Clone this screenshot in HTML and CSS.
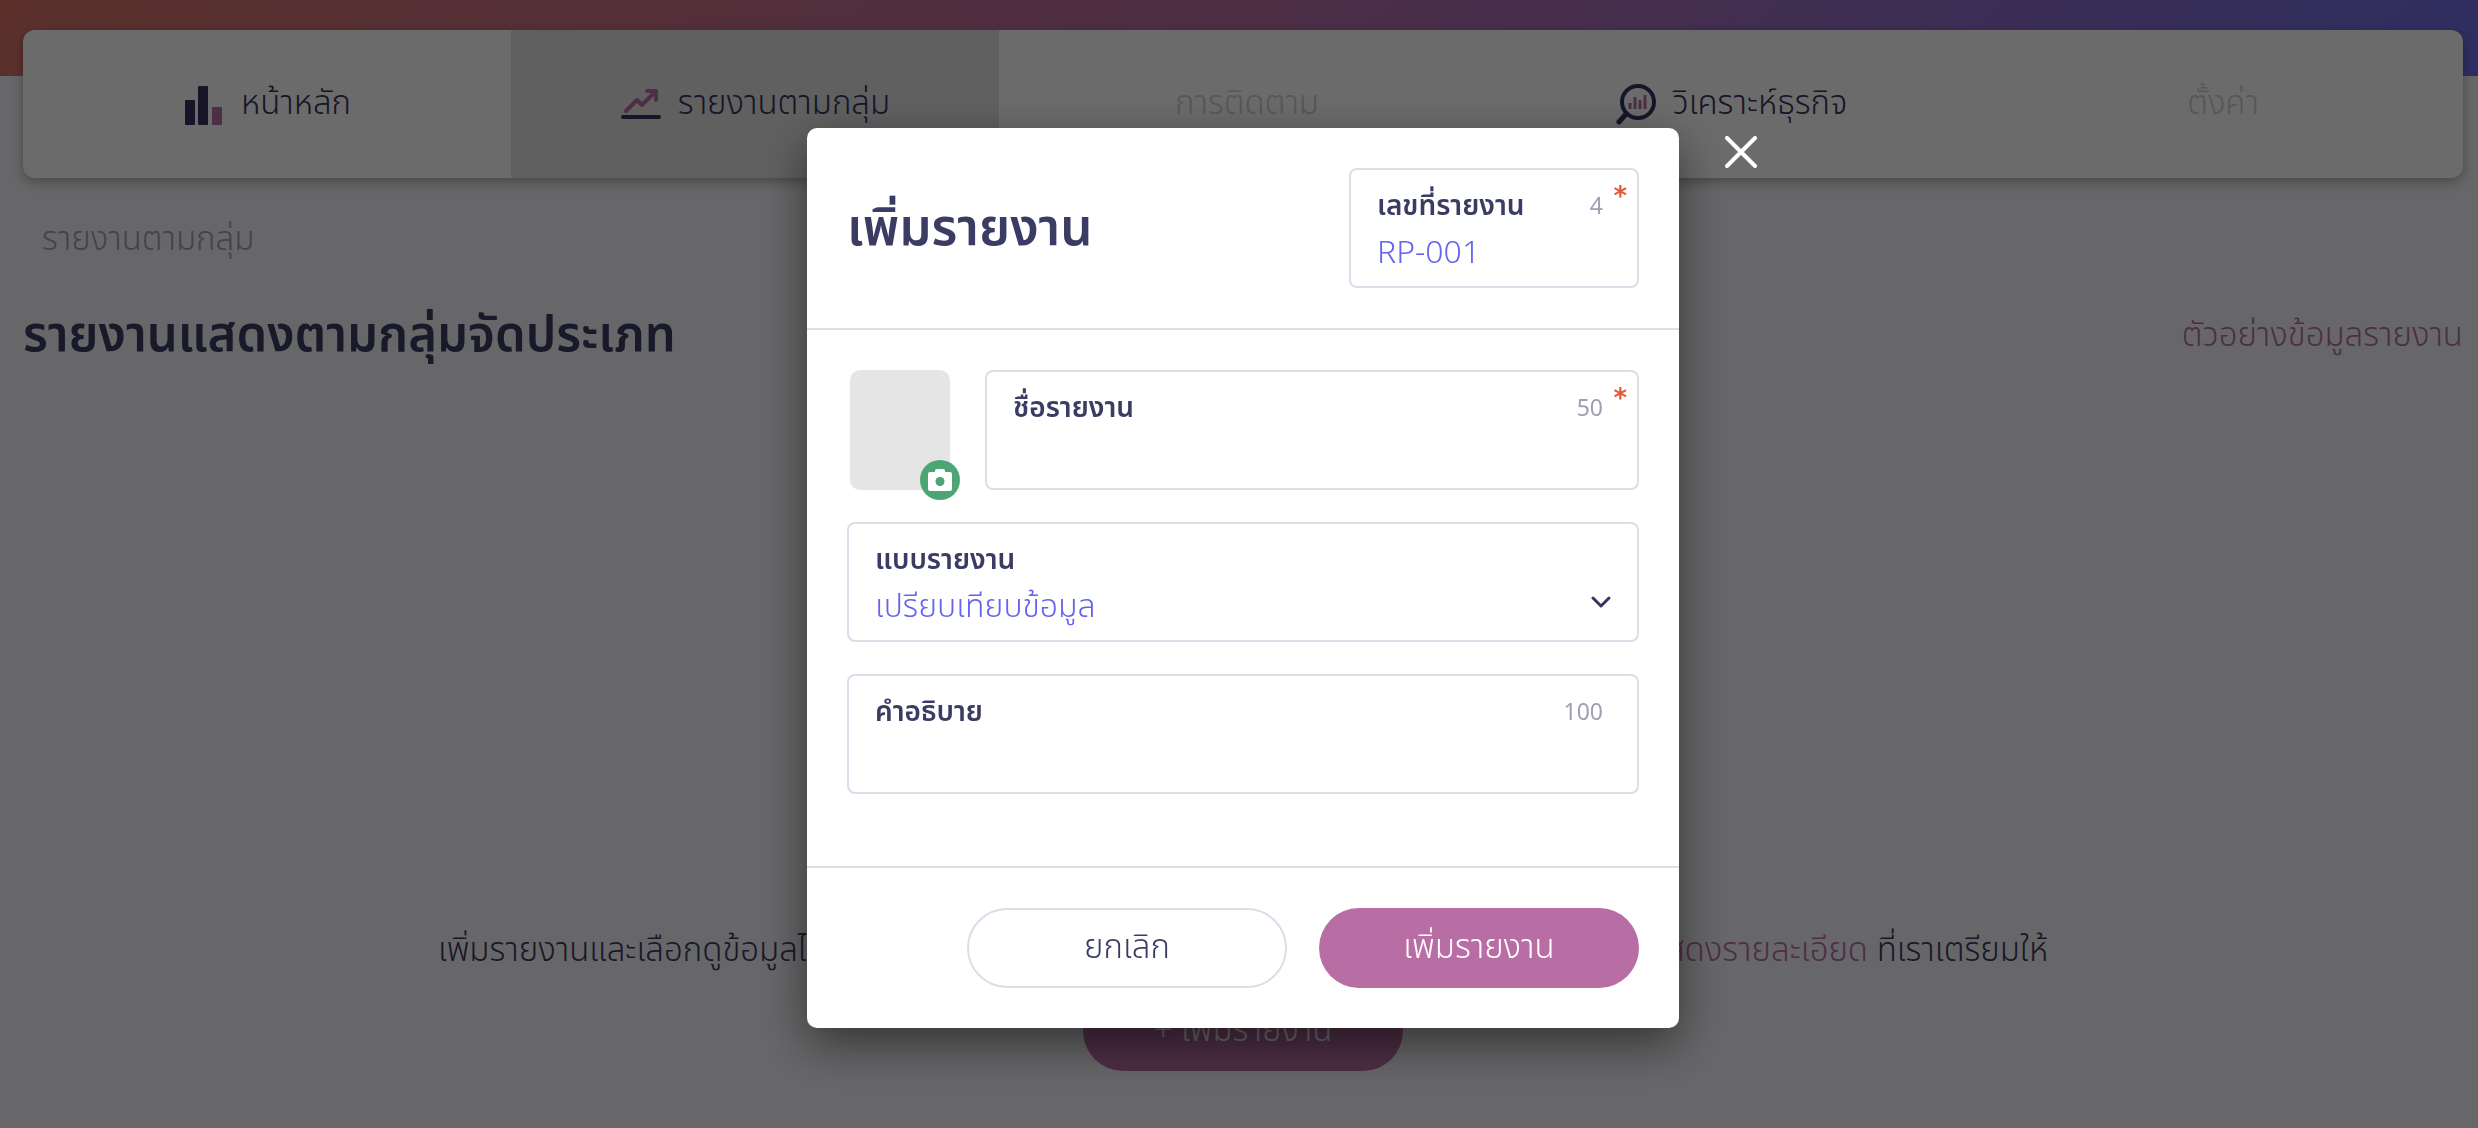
FILE: index.html
```html
<!DOCTYPE html>
<html lang="th">
<head>
  <meta charset="UTF-8">
  <meta name="viewport" content="width=device-width, initial-scale=1">
  <title>เพิ่มรายงาน</title>
  <link rel="stylesheet" href="styles.css">
</head>
<body>
  <div class="page">
    <nav class="main-nav">
      <a href="#" class="nav-item">
        <svg class="nav-icon" viewBox="0 0 42 42">
          <rect x="2" y="17" width="10" height="25" rx="1" fill="#37345e"/>
          <rect x="15" y="3" width="10" height="39" rx="1" fill="#37345e"/>
          <rect x="29" y="24" width="10" height="18" rx="1" fill="#b86ea5"/>
        </svg>
        หน้าหลัก
      </a>
      <a href="#" class="nav-item active">
        <svg class="nav-icon" viewBox="0 0 42 42">
          <path d="M6 28L17 17l5 5L35 9M27 8h9v9" fill="none" stroke="#b86ea5" stroke-width="4" stroke-linecap="round" stroke-linejoin="round"/>
          <path d="M3 34h36" stroke="#37345e" stroke-width="4" stroke-linecap="round"/>
        </svg>
        รายงานตามกลุ่ม
      </a>
      <a href="#" class="nav-item disabled">การติดตาม</a>
      <a href="#" class="nav-item">
        <svg class="nav-icon" viewBox="0 0 42 42">
          <circle cx="23" cy="19" r="16" fill="none" stroke="#37345e" stroke-width="4"/>
          <path d="M11 31l-7 8" stroke="#37345e" stroke-width="5" stroke-linecap="round"/>
          <path d="M15 20v6M20 14v12M25 17v9M30 12v14" stroke="#b86ea5" stroke-width="3"/>
        </svg>
        วิเคราะห์ธุรกิจ
      </a>
      <a href="#" class="nav-item disabled">ตั้งค่า</a>
    </nav>

    <main>
      <p class="breadcrumb">รายงานตามกลุ่ม</p>
      <div class="title-row">
        <h1>รายงานแสดงตามกลุ่มจัดประเภท</h1>
        <a href="#">ตัวอย่างข้อมูลรายงาน</a>
      </div>
      <div class="empty">
        <p>เพิ่มรายงานและเลือกดูข้อมูลได้ ตามกลุ่มที่ต้องการจัดประเภท หรือเลือกดูตัวอย่างรายงานได้จาก <a href="#">แสดงรายละเอียด</a> ที่เราเตรียมให้</p>
        <button type="button" class="btn btn-primary">+ เพิ่มรายงาน</button>
      </div>
    </main>
  </div>

  <div class="overlay">
    <form class="modal">
      <button type="button" class="close" aria-label="ปิด">
        <svg viewBox="0 0 32 32"><path d="M2 2l28 28M30 2L2 30" stroke="#fff" stroke-width="4" stroke-linecap="round"/></svg>
      </button>
      <header class="modal-header">
        <h2>เพิ่มรายงาน</h2>
        <div class="field field-code">
          <label for="code">เลขที่รายงาน</label>
          <span class="count">4</span>
          <span class="required">*</span>
          <input type="text" id="code" value="RP-001">
        </div>
      </header>
      <div class="modal-body">
        <div class="name-row">
          <div class="photo">
            <button type="button" class="camera" aria-label="เพิ่มรูป">
              <svg viewBox="0 0 24 22"><path fill="#fff" d="M2 3h5V1.500Q7 0 9 0h6q2 0 2 1.500V3h5q2 0 2 2v15q0 2-2 2H2q-2 0-2-2V5q0-2 2-2z"/><circle cx="12" cy="12.500" r="4.500" fill="#4ca574"/></svg>
            </button>
          </div>
          <div class="field">
            <label for="name">ชื่อรายงาน</label>
            <span class="count">50</span>
            <span class="required">*</span>
            <input type="text" id="name">
          </div>
        </div>
        <div class="field">
          <label for="type">แบบรายงาน</label>
          <select id="type">
            <option>เปรียบเทียบข้อมูล</option>
          </select>
          <svg class="arrow" viewBox="0 0 20 12"><path d="M2 2l8 8 8-8" fill="none" stroke="#37345e" stroke-width="3" stroke-linecap="round" stroke-linejoin="round"/></svg>
        </div>
        <div class="field">
          <label for="description">คำอธิบาย</label>
          <span class="count">100</span>
          <input type="text" id="description">
        </div>
      </div>
      <footer class="modal-footer">
        <button type="button" class="btn btn-outline">ยกเลิก</button>
        <button type="submit" class="btn btn-primary">เพิ่มรายงาน</button>
      </footer>
    </form>
  </div>
</body>
</html>
```

FILE: styles.css
```css
* {
  box-sizing: border-box;
}
body {
  margin: 0;
  background: #f5f5f9;
  color: #3b3c63;
  font-family: "Noto Sans Thai", "Noto Sans", sans-serif;
  font-size: 33px;
  font-weight: 300;
  line-height: 48px;
}
a {
  color: #b86ea5;
  text-decoration: none;
}
h1, h2, p {
  margin: 0;
}
button, input, select {
  font: inherit;
  color: inherit;
}
.page {
  min-height: 100vh;
  padding: 30px 15px 0 23px;
  background: linear-gradient(135deg, #d97468, #b86ea5 50%, #6e6ee8) no-repeat top / 100% 76px;
}
.main-nav {
  display: grid;
  grid-template-columns: repeat(5, 1fr);
  height: 148px;
  border-radius: 12px;
  background: #fff;
  box-shadow: 0 4px 12px rgba(0, 0, 0, .3);
  overflow: hidden;
}
.nav-item {
  display: flex;
  align-items: center;
  justify-content: center;
  gap: 16px;
  color: #37345e;
}
.nav-item.active {
  background: #e5e5e5;
}
.nav-item.disabled {
  padding-left: 8px;
  color: #d0d0d0;
}
.nav-icon {
  width: 42px;
  height: 42px;
}
.breadcrumb {
  padding: 38px 19px 0;
  color: #a09fb2;
}
.title-row {
  display: flex;
  align-items: center;
  justify-content: space-between;
  margin-top: 36px;
}
h1, h2 {
  font-size: 49px;
  font-weight: 600;
  line-height: 72px;
}
.empty {
  display: flex;
  flex-direction: column;
  align-items: center;
  padding-top: 555px;
  gap: 16px;
  white-space: nowrap;
}
.btn {
  width: 320px;
  height: 80px;
  border: 0;
  border-radius: 40px;
  cursor: pointer;
}
.btn-primary {
  background: #b86ea5;
  color: #fff;
}
.btn-outline {
  border: 2px solid #dddce8;
  background: #fff;
}
.overlay {
  position: fixed;
  inset: 0;
  display: flex;
  align-items: flex-start;
  justify-content: center;
  padding: 128px 0 0 8px;
  background: rgba(0, 0, 0, .58);
}
.modal {
  position: relative;
  width: 872px;
  border-radius: 10px;
  background: #fff;
  box-shadow: 0 16px 48px rgba(0, 0, 0, .5);
}
.close {
  position: absolute;
  top: 8px;
  right: -78px;
  width: 32px;
  height: 32px;
  padding: 0;
  border: 0;
  background: none;
}
.close svg, .camera svg {
  display: block;
  width: 100%;
}
.modal-header {
  display: flex;
  align-items: center;
  justify-content: space-between;
  padding: 40px;
  border-bottom: 2px solid #dddce8;
}
h2 {
  padding-top: 4px;
  font-size: 51px;
}
.modal-body {
  display: flex;
  flex-direction: column;
  gap: 32px;
  padding: 40px 40px 72px;
}
.name-row {
  display: grid;
  grid-template-columns: 106px 1fr;
  gap: 32px;
}
.photo {
  position: relative;
  width: 100px;
  margin: 0 auto;
  border-radius: 10px;
  background: #e5e5e5;
}
.camera {
  position: absolute;
  right: -10px;
  bottom: -10px;
  width: 40px;
  height: 40px;
  padding: 8px;
  border: 0;
  border-radius: 50%;
  background: #4ca574;
}
.field {
  position: relative;
  height: 120px;
  padding: 16px 26px;
  border: 2px solid #dddce8;
  border-radius: 8px;
}
.field-code {
  width: 290px;
}
.field label {
  display: block;
  font-size: 28px;
  font-weight: 600;
  line-height: 42px;
}
.field input, .field select {
  display: block;
  width: 100%;
  height: 50px;
  padding: 0;
  border: 0;
  outline: 0;
  background: none;
  color: #6464f0;
  font-size: 32px;
  appearance: none;
}
.count {
  position: absolute;
  top: 21px;
  right: 34px;
  color: #a09fb2;
  font-size: 23px;
  font-weight: 400;
  line-height: 32px;
}
.required {
  position: absolute;
  top: 10px;
  right: 10px;
  color: #e35a38;
  font-family: "DejaVu Sans", sans-serif;
  font-size: 26px;
  font-weight: 700;
  line-height: 32px;
}
.arrow {
  position: absolute;
  right: 26px;
  bottom: 32px;
  width: 20px;
}
.modal-footer {
  display: flex;
  justify-content: flex-end;
  gap: 32px;
  padding: 40px;
  border-top: 2px solid #dddce8;
}
```
